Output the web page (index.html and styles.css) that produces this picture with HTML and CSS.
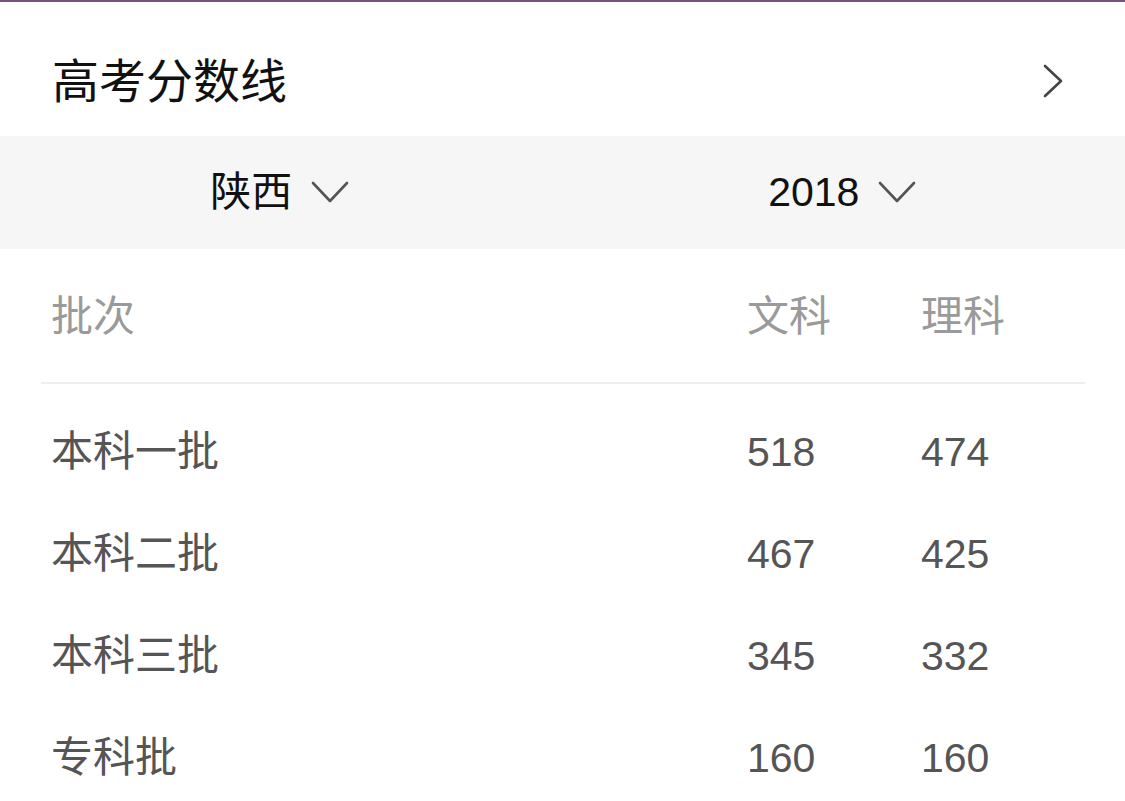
FILE: index.html
```html
<!DOCTYPE html>
<html lang="zh-CN">
<head>
<meta charset="utf-8">
<title>高考分数线</title>
<link rel="stylesheet" href="styles.css">
</head>
<body>
<div class="page">
  <header class="title-bar">
    <h1 class="title">高考分数线</h1>
    <svg class="chev-right" width="20" height="34" viewBox="0 0 20 34"><path d="M2 2 L18 17 L2 32" fill="none" stroke="#444" stroke-width="2.6" stroke-linecap="round" stroke-linejoin="round"/></svg>
  </header>
  <div class="filters">
    <div class="filter">
      <span class="filter-text">陕西</span>
      <svg class="chev-down" width="38" height="22" viewBox="0 0 38 22"><path d="M2 2 L19 20 L36 2" fill="none" stroke="#555" stroke-width="2.6" stroke-linecap="round" stroke-linejoin="round"/></svg>
    </div>
    <div class="filter">
      <span class="filter-text">2018</span>
      <svg class="chev-down" width="38" height="22" viewBox="0 0 38 22"><path d="M2 2 L19 20 L36 2" fill="none" stroke="#555" stroke-width="2.6" stroke-linecap="round" stroke-linejoin="round"/></svg>
    </div>
  </div>
  <div class="table">
    <div class="row head">
      <span>批次</span><span>文科</span><span>理科</span>
    </div>
    <div class="divider"></div>
    <div class="body">
      <div class="row"><span>本科一批</span><span class="num">518</span><span class="num">474</span></div>
      <div class="row"><span>本科二批</span><span class="num">467</span><span class="num">425</span></div>
      <div class="row"><span>本科三批</span><span class="num">345</span><span class="num">332</span></div>
      <div class="row"><span>专科批</span><span class="num">160</span><span class="num">160</span></div>
    </div>
  </div>
</div>
</body>
</html>
```
FILE: styles.css
```css
* { box-sizing: border-box; }
html, body { margin: 0; padding: 0; background: #fff; }
body {
  font-family: "Liberation Sans", "Noto Sans CJK SC", sans-serif;
  width: 1125px;
  height: 801px;
  overflow: hidden;
}
.page {
  border-top: 2px solid #7b4f82;
}
.title-bar {
  height: 134px;
  padding: 24px 62px 0 52px;
  display: flex;
  align-items: center;
  justify-content: space-between;
}
.title {
  margin: 0;
  font-size: 47px;
  font-weight: normal;
  line-height: 1;
  color: #111;
}
.chev-right { display: block; }
.filters {
  height: 113px;
  background: #f6f6f6;
  display: flex;
}
.filter {
  flex: 1;
  display: flex;
  align-items: center;
  justify-content: center;
  gap: 19px;
  padding-right: 3px;
}
.filter-text {
  font-size: 41px;
  line-height: 1;
  color: #111;
}
.chev-down { display: block; margin-top: -2px; }
.row {
  display: grid;
  grid-template-columns: 1fr 174px 174px;
  align-items: center;
  padding: 0 30px 0 51px;
  height: 102px;
  font-size: 42px;
  line-height: 1;
  color: #555;
}
.row .num { font-size: 41px; }
.row.head {
  height: 133px;
  padding-top: 3px;
  color: #9a9a9a;
}
.divider {
  height: 2px;
  background: #eeeeee;
  margin: 0 40px 0 41px;
}
.body {
  padding-top: 17px;
}
```
